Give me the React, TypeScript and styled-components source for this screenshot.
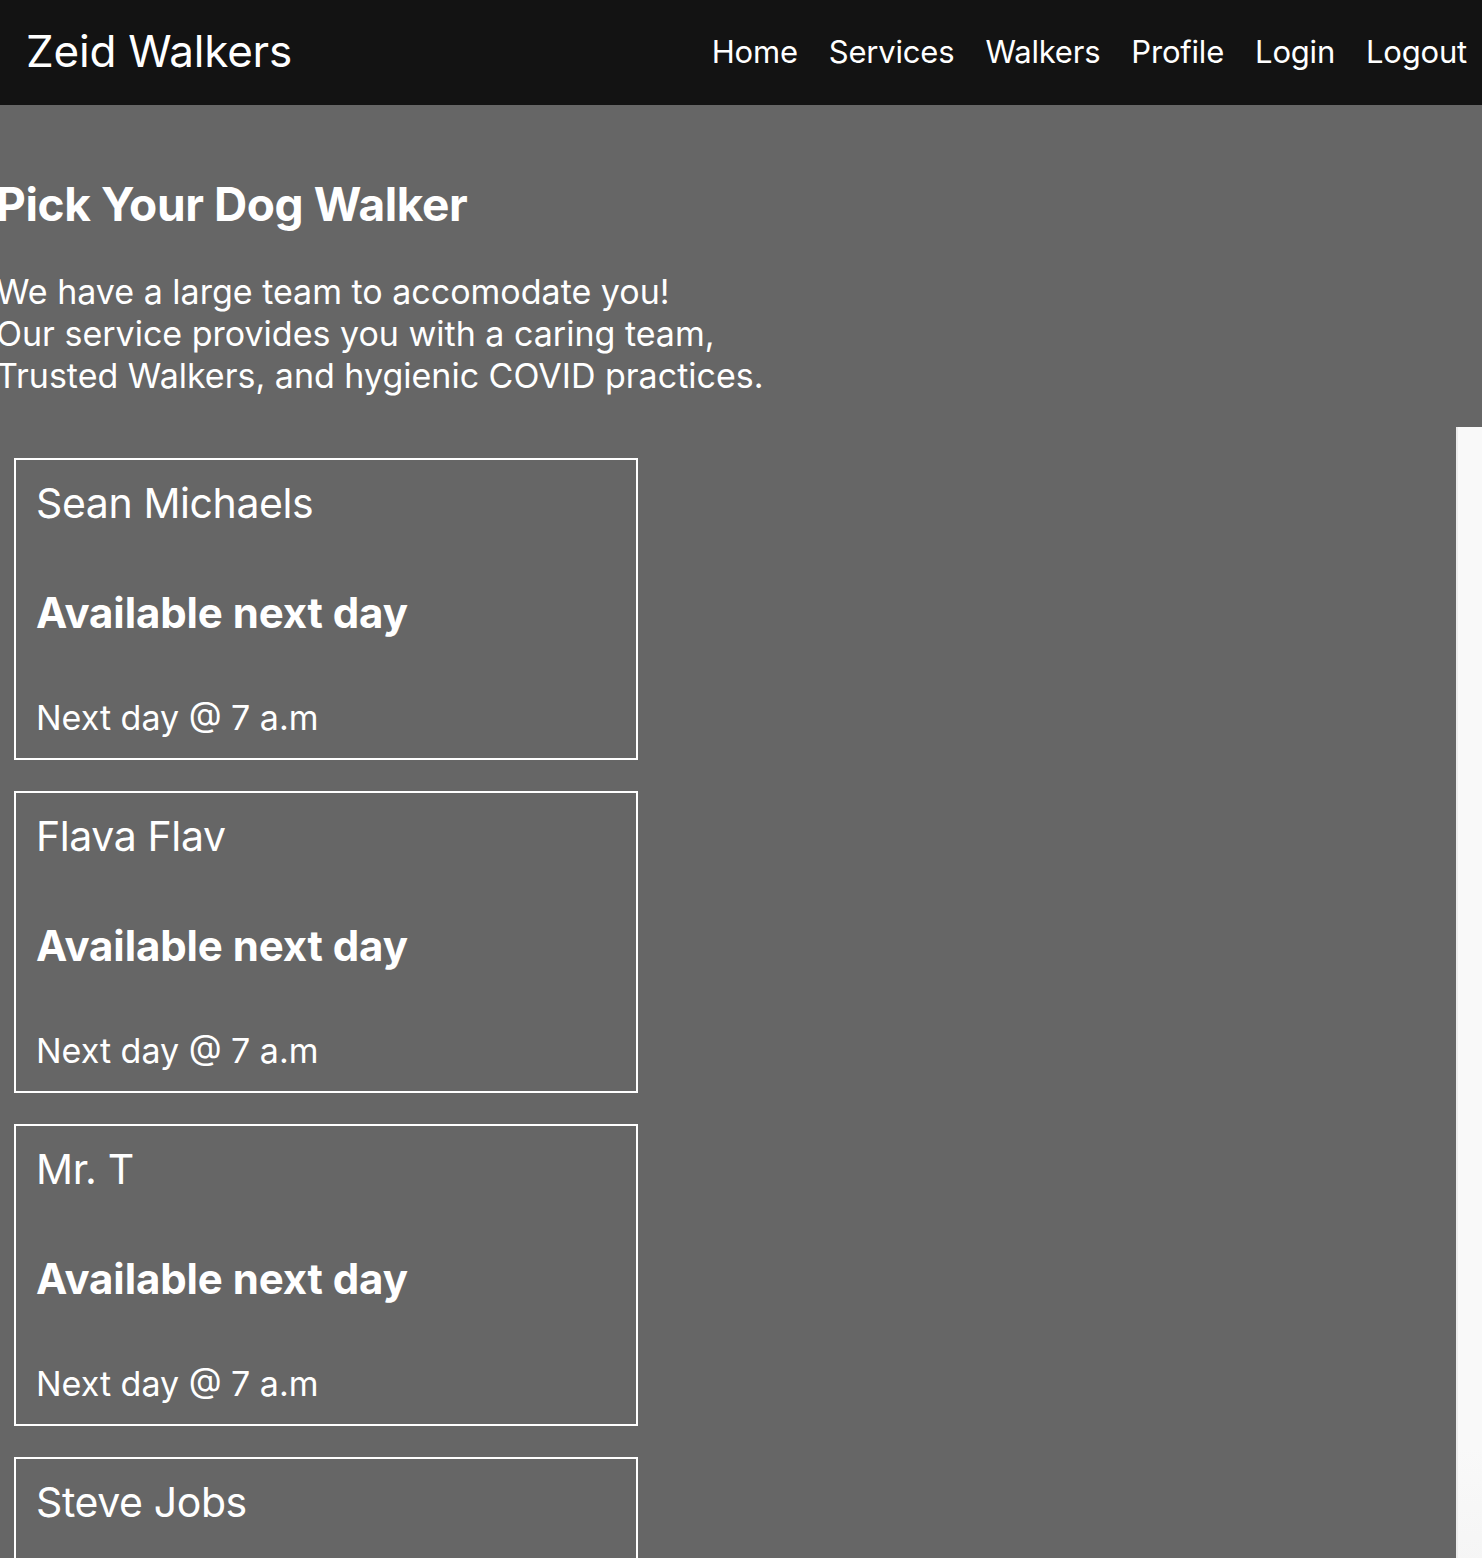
import React from "react";
import styled, { createGlobalStyle } from "styled-components";

const Global = createGlobalStyle`
  html, body { margin: 0; padding: 0; background: #666666; }
  body { font-family: Inter, "Noto Sans", "Liberation Sans", sans-serif; color: #ffffff; overflow: hidden; }
  * { box-sizing: border-box; }
`;

const Header = styled.header`
  height: 105px;
  background: #131313;
  display: flex;
  align-items: center;
  justify-content: space-between;
  padding: 0 15px 3px 26px;
`;

const Brand = styled.div`
  font-size: 44px;
  font-weight: 400;
  letter-spacing: -0.2px;
  color: #ffffff;
`;

const Nav = styled.nav`
  display: flex;
  gap: 31px;
  align-items: center;
`;

const NavLink = styled.a`
  font-size: 31px;
  color: #ffffff;
  text-decoration: none;
  letter-spacing: -0.2px;
`;

const Intro = styled.section`
  margin-left: -4px;
  padding-top: 72px;
`;

const Title = styled.h1`
  margin: 0;
  font-size: 46px;
  font-weight: 700;
  line-height: 1.2;
  letter-spacing: -0.4px;
`;

const Lead = styled.p`
  margin: 39px 0 0;
  font-size: 34px;
  line-height: 42px;
  font-weight: 400;
`;

const Body = styled.div`
  display: flex;
  align-items: flex-start;
  margin-top: 30px;
`;

const List = styled.div`
  display: flex;
  flex-direction: column;
  gap: 31px;
  padding: 31px 0 0 14px;
`;

const Card = styled.article`
  width: 624px;
  height: 302px;
  border: 2px solid #ffffff;
  padding: 19px 20px 18px;
  display: flex;
  flex-direction: column;
`;

const Name = styled.h2`
  margin: 0;
  font-size: 41px;
  font-weight: 400;
  line-height: 1.2;
  letter-spacing: -0.4px;
`;

const Status = styled.h3`
  margin: 60px 0 0;
  font-size: 42px;
  font-weight: 700;
  line-height: 1.2;
  letter-spacing: -0.1px;
`;

const Time = styled.p`
  margin: 59px 0 0;
  font-size: 34px;
  font-weight: 400;
  line-height: 1.2;
`;

const Aside = styled.aside`
  margin-left: auto;
  width: 26px;
  height: 1200px;
  background: linear-gradient(#f9f9f9, #f9f9f9 85%, #f3f3f3);
  border-left: 2px solid #ececec;
`;

const walkers = ["Sean Michaels", "Flava Flav", "Mr. T", "Steve Jobs"];

export default function App() {
  return (
    <>
      <Global />
      <Header>
        <Brand>Zeid Walkers</Brand>
        <Nav>
          {["Home", "Services", "Walkers", "Profile", "Login", "Logout"].map((l) => (
            <NavLink key={l} href="#">{l}</NavLink>
          ))}
        </Nav>
      </Header>
      <Intro>
        <Title>Pick Your Dog Walker</Title>
        <Lead>
          We have a large team to accomodate you!
          <br />
          Our service provides you with a caring team,
          <br />
          Trusted Walkers, and hygienic COVID practices.
        </Lead>
      </Intro>
      <Body>
        <List>
          {walkers.map((w) => (
            <Card key={w}>
              <Name>{w}</Name>
              <Status>Available next day</Status>
              <Time>Next day @ 7 a.m</Time>
            </Card>
          ))}
        </List>
        <Aside />
      </Body>
    </>
  );
}
